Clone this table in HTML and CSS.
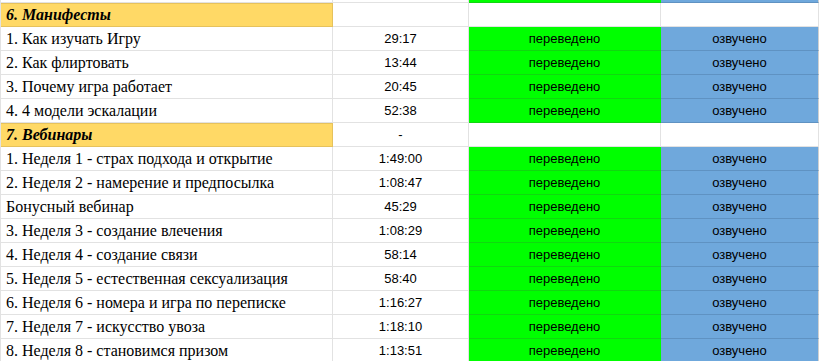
FILE: index.html
```html
<!DOCTYPE html>
<html lang="ru">
<head>
<meta charset="utf-8">
<title>Таблица</title>
<link rel="stylesheet" href="styles.css">
</head>
<body>
<div class="sheet">
  <div class="cell top a"></div><div class="cell top b"></div><div class="cell top c green"></div><div class="cell top d blue"></div>

  <div class="cell a head">6. Манифесты</div><div class="cell b"></div><div class="cell c"></div><div class="cell d"></div>

  <div class="cell a">1. Как изучать Игру</div><div class="cell b num">29:17</div><div class="cell c green">переведено</div><div class="cell d blue">озвучено</div>
  <div class="cell a">2. Как флиртовать</div><div class="cell b num">13:44</div><div class="cell c green">переведено</div><div class="cell d blue">озвучено</div>
  <div class="cell a">3. Почему игра работает</div><div class="cell b num">20:45</div><div class="cell c green">переведено</div><div class="cell d blue">озвучено</div>
  <div class="cell a">4. 4 модели эскалации</div><div class="cell b num">52:38</div><div class="cell c green">переведено</div><div class="cell d blue">озвучено</div>

  <div class="cell a head">7. Вебинары</div><div class="cell b num">-</div><div class="cell c"></div><div class="cell d"></div>

  <div class="cell a">1. Неделя 1 - страх подхода и открытие</div><div class="cell b num">1:49:00</div><div class="cell c green">переведено</div><div class="cell d blue">озвучено</div>
  <div class="cell a">2. Неделя 2 - намерение и предпосылка</div><div class="cell b num">1:08:47</div><div class="cell c green">переведено</div><div class="cell d blue">озвучено</div>
  <div class="cell a">Бонусный вебинар</div><div class="cell b num">45:29</div><div class="cell c green">переведено</div><div class="cell d blue">озвучено</div>
  <div class="cell a">3. Неделя 3 - создание влечения</div><div class="cell b num">1:08:29</div><div class="cell c green">переведено</div><div class="cell d blue">озвучено</div>
  <div class="cell a">4. Неделя 4 - создание связи</div><div class="cell b num">58:14</div><div class="cell c green">переведено</div><div class="cell d blue">озвучено</div>
  <div class="cell a">5. Неделя 5 - естественная сексуализация</div><div class="cell b num">58:40</div><div class="cell c green">переведено</div><div class="cell d blue">озвучено</div>
  <div class="cell a">6. Неделя 6 - номера и игра по переписке</div><div class="cell b num">1:16:27</div><div class="cell c green">переведено</div><div class="cell d blue">озвучено</div>
  <div class="cell a">7. Неделя 7 - искусство увоза</div><div class="cell b num">1:18:10</div><div class="cell c green">переведено</div><div class="cell d blue">озвучено</div>
  <div class="cell a">8. Неделя 8 - становимся призом</div><div class="cell b num">1:13:51</div><div class="cell c green">переведено</div><div class="cell d blue">озвучено</div>
</div>
</body>
</html>
```
FILE: styles.css
```css
html, body {
  margin: 0;
  padding: 0;
  background: #ffffff;
  overflow: hidden;
}

.sheet {
  display: grid;
  grid-template-columns: 332px 136px 192px 158px;
  grid-template-rows: 3px;
  grid-auto-rows: 24px;
  border-left: 1px solid #e2e2e2;
  width: 818px;
}

.cell {
  box-sizing: border-box;
  border-right: 1px solid #e2e2e2;
  border-bottom: 1px solid #e2e2e2;
  display: flex;
  align-items: flex-end;
  white-space: nowrap;
  overflow: hidden;
  color: #000000;
  font-family: "Liberation Sans", Arial, sans-serif;
  font-size: 13px;
  line-height: 16px;
  padding-bottom: 3px;
}

.cell.top {
  height: 3px;
  padding: 0;
}

.a {
  font-family: "Liberation Serif", "Times New Roman", serif;
  font-size: 16px;
  line-height: 18px;
  padding-left: 5px;
  padding-bottom: 2px;
}

.head {
  background: #ffd966;
  font-weight: bold;
  font-style: italic;
  border-right-color: #e6c25c;
  border-bottom-color: #e6c25c;
  box-shadow: inset 0 1px 0 #e6c25c;
}

.b, .c, .d {
  justify-content: center;
}

.green {
  background: #00ff00;
  border-bottom-color: #10d810;
  border-right-color: #00ff00;
}

.blue {
  background: #6fa8dc;
  border-bottom-color: #5f92c2;
  border-right-color: #d0d0d0;
}
```
